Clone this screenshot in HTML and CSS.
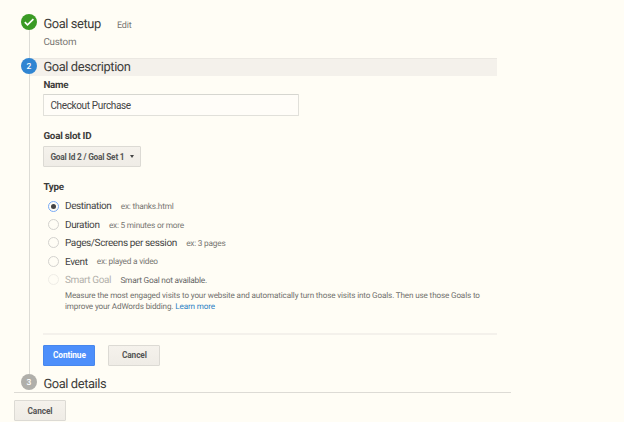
FILE: index.html
```html
<!DOCTYPE html>
<html lang="en">
<head>
<meta charset="utf-8">
<title>Goal setup</title>
<link rel="stylesheet" href="styles.css">
</head>
<body>
<main class="wizard">
  <section class="step step-done">
    <div class="rail">
      <span class="badge badge-done"><svg viewBox="0 0 16 16" width="16" height="16"><path d="M3.8 8.2l2.7 2.6 5.9-5.6" fill="none" stroke="#fff" stroke-width="1.7"/></svg></span>
    </div>
    <div class="content">
      <header class="head"><h2>Goal setup</h2><a class="edit">Edit</a></header>
      <p class="summary">Custom</p>
    </div>
  </section>

  <section class="step step-active">
    <div class="rail"><span class="badge badge-active">2</span></div>
    <div class="content">
      <header class="head head-active"><h2>Goal description</h2></header>
      <form class="form">
        <label class="label name-label" for="name">Name</label>
        <input class="input" id="name" type="text" value="Checkout Purchase">
        <div class="label slot-label">Goal slot ID</div>
        <button class="button select" type="button"><span>Goal Id 2 / Goal Set 1</span><i class="caret"></i></button>
        <div class="label type-label">Type</div>
        <div class="options">
          <div class="option"><i class="radio checked"></i><span class="option-name">Destination</span><span class="hint">ex: thanks.html</span></div>
          <div class="option"><i class="radio"></i><span class="option-name">Duration</span><span class="hint">ex: 5 minutes or more</span></div>
          <div class="option"><i class="radio"></i><span class="option-name">Pages/Screens per session</span><span class="hint">ex: 3 pages</span></div>
          <div class="option"><i class="radio"></i><span class="option-name">Event</span><span class="hint">ex: played a video</span></div>
          <div class="option disabled"><i class="radio"></i><span class="option-name">Smart Goal</span><span class="hint">Smart Goal not available.</span></div>
        </div>
        <p class="note">Measure the most engaged visits to your website and automatically turn those visits into Goals. Then use those Goals to<br>improve your AdWords bidding. <a class="link">Learn more</a></p>
        <div class="actions">
          <button class="button primary" type="button">Continue</button>
          <button class="button" type="button">Cancel</button>
        </div>
      </form>
    </div>
  </section>

  <section class="step step-next">
    <div class="rail"><span class="badge badge-next">3</span></div>
    <div class="content"><header class="head"><h2>Goal details</h2></header></div>
  </section>

  <footer class="footer"><button class="button" type="button">Cancel</button></footer>
</main>
</body>
</html>
```
FILE: styles.css
```css
* { box-sizing: border-box; }
html { background: #fffdf5; }
body {
  margin: 0;
  height: 422px;
  overflow: hidden;
  font-family: Roboto, "Liberation Sans", sans-serif;
  color: #444;
  text-rendering: geometricPrecision;
}
h2, p { margin: 0; font-weight: 400; }
.wizard { padding: 14px 0 0 14px; width: 511px; }
.step {
  display: grid;
  grid-template-columns: 16px 1fr;
  column-gap: 6.4px;
  padding: 0 14px 0 7px;
}
.step-done { height: 44px; }
.step-active { height: 316px; }
.step-next { height: 18px; }
.rail {
  display: flex;
  flex-direction: column;
  align-items: center;
  position: relative;
  z-index: 1;
}
.rail::after { content: ""; flex: 1; width: 1px; background: #dddcd6; }
.step-next .rail::after { display: none; }
.badge {
  display: flex;
  align-items: center;
  justify-content: center;
  width: 16px;
  height: 16px;
  flex: none;
  border-radius: 50%;
  color: #fff;
  font-size: 8.5px;
  font-weight: 500;
}
.badge-done { background: #3a9a24; }
.badge-active { background: #3085d2; padding-top: 1px; }
.badge-next { background: #b0afaa; padding-top: 1px; }
.head { display: flex; align-items: center; height: 18px; }
.head h2 { font-size: 12.9px; line-height: 18px; padding-top: 2px; letter-spacing: -0.4px; color: #3c3c3a; }
.step-done .head { height: 20px; }
.head-active {
  margin-left: -14px;
  padding-left: 14px;
  background: #f4f1eb;
  border-top: 1px solid #ebe8e2;
}
.head-active h2 { padding-top: 1px; }
.step-next .head { height: 20px; }
.edit { margin-left: 16px; font-size: 9px; letter-spacing: -0.15px; color: #777672; padding-top: 3px; }
.summary { font-size: 9.8px; letter-spacing: -0.2px; line-height: 18px; color: #777672; }
.form { display: flex; flex-direction: column; align-items: flex-start; }
.label { font-size: 9.8px; line-height: 12px; font-weight: 700; letter-spacing: -0.22px; color: #3c3c3a; }
.name-label { margin-top: 4px; }
.input {
  margin-top: 2px;
  width: 256px;
  height: 22px;
  padding: 0 6px;
  border: 1px solid #e1e0da;
  border-top-color: #d6d6d0;
  border-radius: 1px;
  background: #fffdf8;
  font: 10px Roboto, sans-serif;
  letter-spacing: -0.35px;
  color: #444;
}
.slot-label { margin-top: 15px; }
.button {
  width: 52px;
  height: 21px;
  padding: 0;
  border: 1px solid #dcdad4;
  border-radius: 1px;
  background: linear-gradient(#f5f2ec, #efece6);
  font: 700 8.3px Roboto, sans-serif;
  letter-spacing: -0.1px;
  color: #555;
}
.select {
  display: flex;
  align-items: center;
  justify-content: space-between;
  width: 98px;
  margin-top: 3px;
  padding: 0 6px;
  letter-spacing: -0.2px;
}
.caret { border: 2.5px solid transparent; border-top: 3px solid #444; border-bottom: 0; }
.type-label { margin-top: 15px; }
.options { margin-top: 3px; padding-left: 5px; }
.option { display: flex; align-items: center; height: 18.4px; white-space: nowrap; }
.radio {
  display: grid;
  place-items: center;
  width: 11px;
  height: 11px;
  margin-right: 5.6px;
  border: 1px solid #d3d2ce;
  border-radius: 50%;
}
.checked { border-color: #78aaf5; }
.checked::after { content: ""; width: 5px; height: 5px; border-radius: 50%; background: #444; }
.option-name { font-size: 10px; letter-spacing: -0.38px; padding-top: 1.5px; }
.hint { margin-left: 9.3px; font-size: 8.3px; letter-spacing: -0.23px; color: #777672; padding-top: 2px; }
.disabled .option-name { color: #b3b1ab; }
.disabled .radio { border-color: #efede7; }
.disabled .hint { color: #666; }
.note { margin: 1px 0 0 21.6px; font-size: 8.1px; letter-spacing: -0.135px; line-height: 11.5px; color: #70706c; white-space: nowrap; }
.link { color: #2a7fc4; }
.actions {
  display: flex;
  gap: 13px;
  width: 100%;
  margin-top: 20px;
  padding-top: 10px;
  border-top: 2px solid #f4f1eb;
}
.primary { background: #4d8ffb; border-color: #4787ed; color: #fff; }
.footer { padding-top: 7px; border-top: 1px solid #dddbd5; width: 497px; line-height: 0; }
```
